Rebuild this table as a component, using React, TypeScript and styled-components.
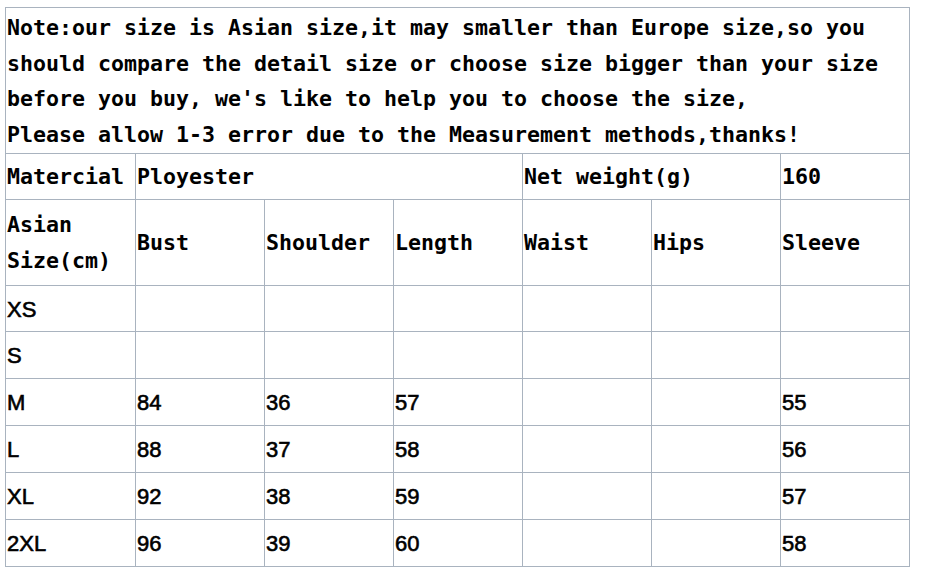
import { FC } from 'react'
import styled, { createGlobalStyle } from 'styled-components'

const GlobalStyle = createGlobalStyle`
  html, body {
    margin: 0;
    padding: 0;
    background: #fff;
  }
`

const noteLines = [
  'Note:our size is Asian size,it may smaller than Europe size,so you',
  'should compare the detail size or choose size bigger than your size',
  "before you buy, we's like to help you to choose the size,",
  'Please allow 1-3 error due to the Measurement methods,thanks!',
]

const sizes = [
  { size: 'XS', bust: '', shoulder: '', length: '', waist: '', hips: '', sleeve: '' },
  { size: 'S', bust: '', shoulder: '', length: '', waist: '', hips: '', sleeve: '' },
  { size: 'M', bust: '84', shoulder: '36', length: '57', waist: '', hips: '', sleeve: '55' },
  { size: 'L', bust: '88', shoulder: '37', length: '58', waist: '', hips: '', sleeve: '56' },
  { size: 'XL', bust: '92', shoulder: '38', length: '59', waist: '', hips: '', sleeve: '57' },
  { size: '2XL', bust: '96', shoulder: '39', length: '60', waist: '', hips: '', sleeve: '58' },
]

const colWidths = [130, 129, 129, 129, 129, 129, 129]

const Page = styled.div`
  padding: 7px 0 0 5px;
  width: 905px;
`

const Note = styled.div`
  border: 1px solid #a9b3bf;
  border-bottom: none;
  padding: 2px 0 0 1px;
  height: 143px;
  font-family: 'DejaVu Sans Mono', 'Liberation Mono', monospace;
  font-weight: bold;
  font-size: 21.6px;
  line-height: 35.7px;
  color: #000;
  white-space: pre;
`

const Table = styled.table`
  border-collapse: collapse;
  table-layout: fixed;
  width: 905px;
`

const Row = styled.tr<{ $h: number }>`
  height: ${p => p.$h}px;
`

const Cell = styled.td<{ $mono?: boolean }>`
  border: 1px solid #a9b3bf;
  padding: 0 0 0 1px;
  vertical-align: middle;
  color: #000;
  font-family: ${p => p.$mono ? "'DejaVu Sans Mono', 'Liberation Mono', monospace" : "'Liberation Sans', Arial, sans-serif"};
  font-weight: ${p => p.$mono ? 'bold' : 'normal'};
  font-size: ${p => p.$mono ? '21.6px' : '22px'};
  line-height: ${p => p.$mono ? '35.7px' : '24px'};
  white-space: nowrap;
  overflow: hidden;
`

const Value = styled.span`
  display: inline-block;
  padding-top: 2px;
  -webkit-text-stroke: 0.6px #000;
`

const App: FC = () => {
  return (
    <Page>
      <GlobalStyle />
      <Note>
        {noteLines.map(line => <div key={line}>{line}</div>)}
      </Note>
      <Table>
        <colgroup>
          {colWidths.map((w, i) => <col key={i} style={{ width: w }} />)}
        </colgroup>
        <tbody>
          <Row $h={46}>
            <Cell $mono>Matercial</Cell>
            <Cell $mono colSpan={3}>Ployester</Cell>
            <Cell $mono colSpan={2}>Net weight(g)</Cell>
            <Cell $mono>160</Cell>
          </Row>
          <Row $h={86}>
            <Cell $mono>Asian<br />Size(cm)</Cell>
            <Cell $mono>Bust</Cell>
            <Cell $mono>Shoulder</Cell>
            <Cell $mono>Length</Cell>
            <Cell $mono>Waist</Cell>
            <Cell $mono>Hips</Cell>
            <Cell $mono>Sleeve</Cell>
          </Row>
          {sizes.map((s, i) => (
            <Row $h={i === 0 ? 46 : 47} key={s.size}>
              <Cell><Value>{s.size}</Value></Cell>
              <Cell><Value>{s.bust}</Value></Cell>
              <Cell><Value>{s.shoulder}</Value></Cell>
              <Cell><Value>{s.length}</Value></Cell>
              <Cell><Value>{s.waist}</Value></Cell>
              <Cell><Value>{s.hips}</Value></Cell>
              <Cell><Value>{s.sleeve}</Value></Cell>
            </Row>
          ))}
        </tbody>
      </Table>
    </Page>
  )
}

export default App
